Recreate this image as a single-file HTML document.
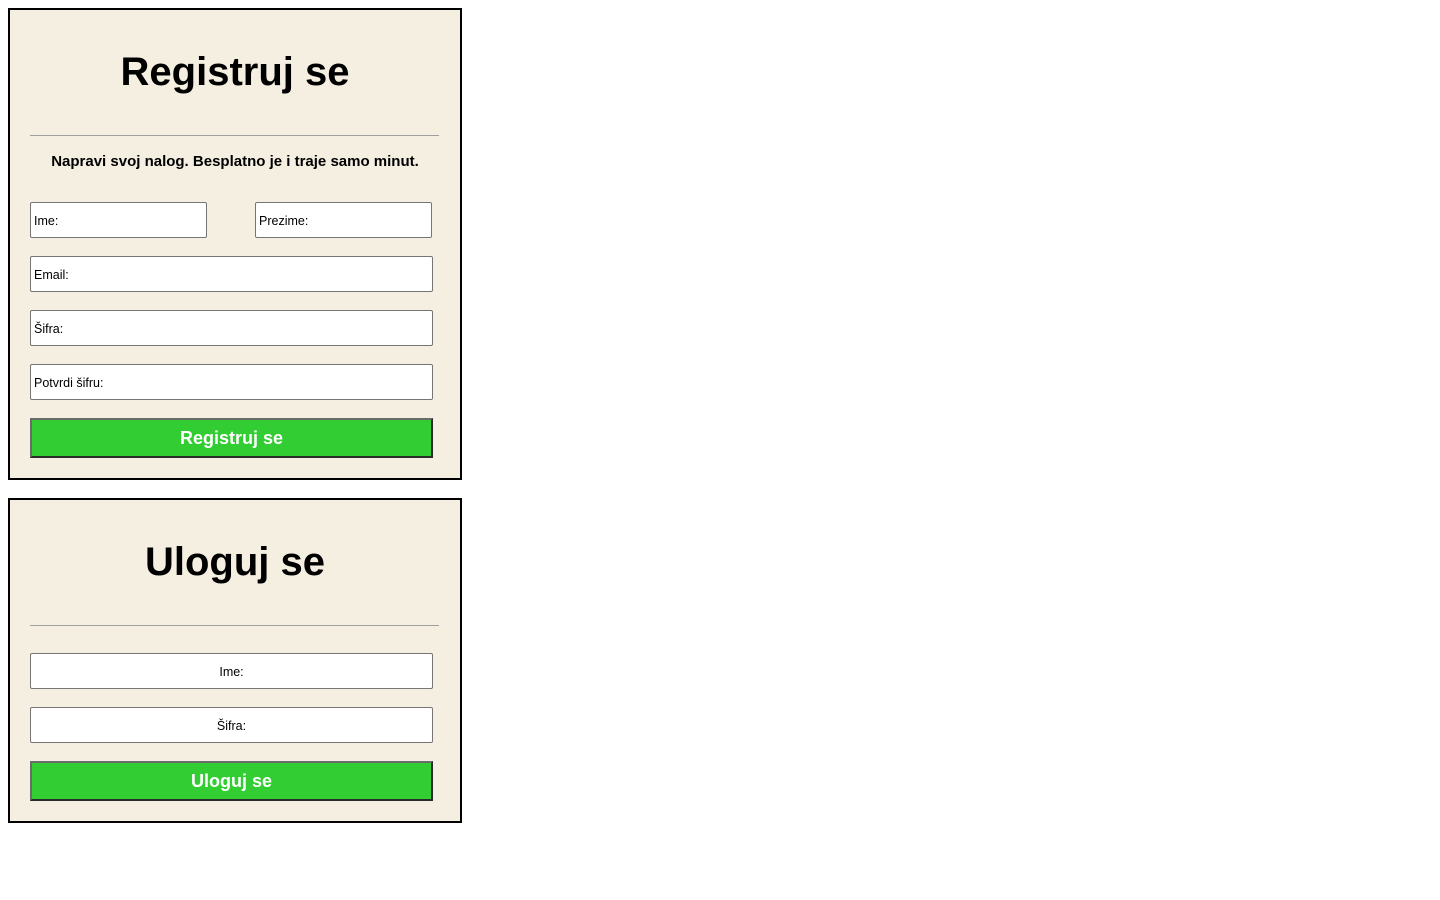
<!DOCTYPE html>
<html><head><style>
body{margin:0;background:#fff;font-family:"Liberation Sans",Arial,sans-serif;}
.box{position:absolute;left:8px;width:450px;border:2px solid #000;background:#f5efe2;}
.a{position:absolute;}
h1{position:absolute;left:0;width:450px;margin:0;text-align:center;font-size:40px;font-weight:bold;line-height:48px;}
.hr{position:absolute;left:20px;width:409px;height:1px;background:#a0a0a0;}
.in{position:absolute;box-sizing:border-box;height:36px;background:#fff;border:1px solid #767676;border-radius:2px;font-size:12.5px;line-height:36px;padding-left:3px;color:#000;}
.btn{position:absolute;left:20px;width:403px;height:40px;box-sizing:border-box;background:#32cd32;border:2px solid;border-color:#6b6b6b #2a2a2a #2a2a2a #6b6b6b;color:#fff;font-weight:bold;font-size:18px;line-height:36px;text-align:center;}
</style></head><body>
<div class="box" style="top:8px;height:468px;">
<h1 style="top:38px;">Registruj se</h1>
<div class="hr" style="top:125px;"></div>
<div class="a" style="left:0;width:450px;top:143px;text-align:center;font-weight:bold;font-size:15px;line-height:18px;">Napravi svoj nalog. Besplatno je i traje samo minut.</div>
<div class="in" style="left:20px;top:192px;width:177px;">Ime:</div>
<div class="in" style="left:245px;top:192px;width:177px;">Prezime:</div>
<div class="in" style="left:20px;top:246px;width:403px;">Email:</div>
<div class="in" style="left:20px;top:300px;width:403px;">Šifra:</div>
<div class="in" style="left:20px;top:354px;width:403px;">Potvrdi šifru:</div>
<div class="btn" style="top:408px;">Registruj se</div>
</div>
<div class="box" style="top:498px;height:321px;">
<h1 style="top:38px;">Uloguj se</h1>
<div class="hr" style="top:125px;"></div>
<div class="in" style="left:20px;top:153px;width:403px;text-align:center;padding:0;">Ime:</div>
<div class="in" style="left:20px;top:207px;width:403px;text-align:center;padding:0;">Šifra:</div>
<div class="btn" style="top:261px;">Uloguj se</div>
</div>
</body></html>
